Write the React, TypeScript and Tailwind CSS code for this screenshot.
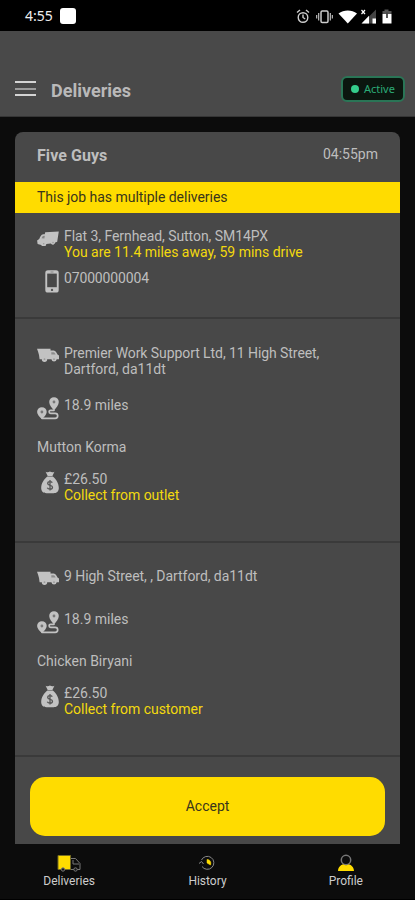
import React from "react";

const Truck = () => (
  <svg viewBox="0 0 22 14" className="h-[14px] w-[22px]" fill="currentColor">
    <path d="M0 0.8h13.5v1.6h3.2c2 0 3 2.3 3.8 4.2l1.5 1v3.6h-2.3a2.7 2.7 0 0 1-5.3 0h-4.2a2.7 2.7 0 0 1-5.4 0H2.6L2 7 1 3.4z" />
    <path d="M14.3 4.2h2.3c1 0 1.6 1.3 2 2.4h-4.3z" fill="#8c8c8c" />
    <circle cx="7.5" cy="11.2" r="0.9" fill="#999" />
    <circle cx="17" cy="11.2" r="0.9" fill="#999" />
  </svg>
);

const TruckLeft = () => (
  <svg viewBox="0 0 22 15" className="h-[15px] w-[22px]" fill="currentColor">
    <path d="M8.2 1.2 21.8.6l-1.6 10.2-2 .8a2.4 2.4 0 0 1-4.4 1l-4.5.4a2.6 2.6 0 0 1-5 .9L.6 13 .1 9.6l2.1-1.5C3.1 6 4 3.6 6.2 3.3l1.5-.1z" />
    <path d="m4.5 7.2 1.3-2.3 2-.2-.4 2.7z" fill="#858585" />
    <circle cx="6.7" cy="12.7" r="0.8" fill="#999" />
    <circle cx="16" cy="11.6" r="0.8" fill="#999" />
  </svg>
);

const Phone = () => (
  <svg viewBox="0 0 14 23" className="h-[23px] w-[14px]">
    <rect x="0.3" y="0.3" width="13.4" height="22.2" rx="2.6" fill="currentColor" />
    <rect x="2.2" y="3.6" width="9.6" height="13.6" fill="#484848" />
    <circle cx="7" cy="19.9" r="1.2" fill="#555" />
    <path d="M5.5 2h3" stroke="#777" strokeWidth="0.8" />
  </svg>
);

const Route = () => (
  <svg viewBox="0 0 22 23" className="h-[23px] w-[22px]">
    <path d="M5 21.3h13.2a2.5 2.5 0 0 0 0-5h-4.6a1.5 1.5 0 0 1 0-3H17" fill="none" stroke="currentColor" strokeWidth="1.7" strokeLinecap="round" />
    <path d="M17 0.2a4.8 4.8 0 0 1 4.8 4.8c0 3-2.7 6-4.8 8.4-2.1-2.4-4.8-5.4-4.8-8.4A4.8 4.8 0 0 1 17 .2zM4.9 10.2A4.8 4.8 0 0 1 9.7 15c0 2.4-2.5 5-4.8 7C2.6 20 .1 17.4.1 15a4.8 4.8 0 0 1 4.8-4.8z" fill="currentColor" />
    <circle cx="17" cy="5" r="1.4" fill="#777" />
    <circle cx="4.9" cy="15" r="1.4" fill="#777" />
  </svg>
);

const Money = () => (
  <svg viewBox="0 0 18 23" className="h-[23px] w-[18px]">
    <path d="M4.6 0.7c1.5 1 2.8.8 4.3-.1 1.6.9 3 1.1 4.5.1l-2 4.200H6.700zM6.400 5.500h5.400c3.300 2.400 6 6.800 6 11.500 0 3.500-2.300 5.200-5.200 5.200H5.400C2.500 22.200.2 20.500.2 17c0-4.700 2.900-9.100 6.200-11.500z" fill="currentColor" />
    <path d="M11.300 11.700c-.5-.8-1.300-1.100-2.300-1.100-1.300 0-2.300.6-2.300 1.800 0 2.700 4.800 1.200 4.800 3.800 0 1.200-1.100 1.900-2.500 1.900-1.200 0-2.200-.4-2.700-1.400M9 9v10.500" fill="none" stroke="#555" strokeWidth="1.300" />
  </svg>
);

function Row({ icon, children, className = "" }: { icon: React.ReactNode; children: React.ReactNode; className?: string }) {
  return (
    <div className={`flex text-[14px] leading-4 ${className}`}>
      <div className="flex h-4 w-[27px] shrink-0 justify-end pr-[5px] text-[#c2c2c2]">{icon}</div>
      <div className="whitespace-nowrap">{children}</div>
    </div>
  );
}

const Yellow = ({ children }: { children: React.ReactNode }) => <div className="tracking-[-0.02px] text-[#f3d90e]">{children}</div>;

function Drop({ address, item, collect, className, addressClass }: { address: React.ReactNode; item: string; collect: string; className: string; addressClass: string }) {
  return (
    <section className={`flex flex-col border-b-2 border-[#3a3a3a] pl-[22px] ${className}`}>
      <Row icon={<div className="mt-[3px]"><Truck /></div>} className={addressClass}>{address}</Row>
      <Row icon={<div><Route /></div>} className="mt-[26px] h-4">18.9 miles</Row>
      <div className="mt-[26px] text-[14px] leading-4">{item}</div>
      <Row icon={<div><Money /></div>} className="mt-4">
        <div>£26.50</div>
        <Yellow>{collect}</Yellow>
      </Row>
    </section>
  );
}

export default function App() {
  return (
    <div className="flex h-[900px] w-[415px] flex-col overflow-hidden bg-[#0c0c0c] font-['Roboto',sans-serif] text-[#bebebe]">
      <div className="flex h-[31px] shrink-0 items-center bg-black pl-[25px] pr-[22px] text-white">
        <span className="font-['Noto_Sans',sans-serif] text-[14px] text-[#eee]">4:55</span>
        <span className="ml-[7px] h-4 w-4 rounded-[3px] bg-white" />
        <svg viewBox="0 0 98 18" className="ml-auto h-[18px] w-[98px]" fill="none" stroke="#ccc">
          <circle cx="8" cy="10.500" r="4.800" strokeWidth="1.400" />
          <path d="M8 7.500v3l2.200 1.500M2 5.500l3-2.500M14 5.500l-3-2.500" strokeWidth="1.400" />
          <rect x="26" y="4" width="7" height="11.500" rx="1.200" strokeWidth="1.500" />
          <path d="M23.700 6v7.500M35.300 6v7.500M21.700 8v3.500M37.300 8v3.500" strokeWidth="1.100" />
          <path d="M43.500 6.500c5.200-4 13.300-4 18.500 0L52.800 16.500z" fill="#fff" stroke="none" />
          <path d="M81 2.500v14H67z" fill="#444" stroke="none" />
          <path d="M74 8.700v7.800h-7.500zM77.500 11.500h3.500v5h-3.500z" fill="#fff" stroke="none" />
          <path d="m66.500 3 3.500 4m0-4-3.500 4" stroke="#fff" strokeWidth="1.200" />
          <path d="M89.500 2.500h4V4h3v3h-9V4h2z" fill="#555" stroke="none" />
          <path d="M87.500 7h9v9.500h-9z" fill="#fff" stroke="none" />
          <path d="M92 5.500V11" stroke="#444" strokeWidth="1.800" />
        </svg>
      </div>
      <header className="flex h-[86px] shrink-0 items-center border-b border-[#353535] bg-[#494949] pl-[15px] pr-[10px] pt-[30px]">
        <div className="flex h-[15px] w-[21px] flex-col justify-between">
          <i className="h-[2px] bg-[#d4d4d4]" />
          <i className="h-[2px] bg-[#9c9c9c]" />
          <i className="h-[2px] bg-[#d4d4d4]" />
        </div>
        <h1 className="ml-[15px] mt-[4px] text-[18px] font-bold leading-6 text-[#b9b9b9]">Deliveries</h1>
        <div className="ml-auto flex h-[26px] w-[64px] items-center rounded-[6px] border-2 border-[#2a7556] bg-[#0b160f] pl-[8px] text-[#2bab77]">
          <i className="h-2 w-2 rounded-full bg-[#35cd8c]" />
          <span className="ml-[5px] font-['Noto_Sans',sans-serif] text-[11px] leading-4">Active</span>
        </div>
      </header>
      <main className="mx-[15px] mt-[15px] flex h-[712px] shrink-0 flex-col overflow-hidden rounded-t-[8px] bg-[#484848]">
        <div className="flex h-[50px] shrink-0 justify-between px-[22px] pt-[14px]">
          <h2 className="text-[16px] font-bold leading-5 tracking-[0.06px]">Five Guys</h2>
          <span className="mt-[-1px] text-[14px] leading-[18px]">04:55pm</span>
        </div>
        <div className="flex h-[31px] shrink-0 items-center bg-[#ffdc00] pl-[22px] text-[14px] tracking-[-0.03px] text-[#39351c]">This job has multiple deliveries</div>
        <section className="h-[106px] shrink-0 border-b-2 border-[#3a3a3a] pl-[22px] pt-[15px]">
          <Row icon={<div className="mt-[3px]"><TruckLeft /></div>}>
            <div className="tracking-[-0.06px]">Flat 3, Fernhead, Sutton, SM14PX</div>
            <Yellow>You are 11.4 miles away, 59 mins drive</Yellow>
          </Row>
          <Row icon={<Phone />} className="mt-[10px] tracking-[-0.15px]">07000000004</Row>
        </section>
        <Drop className="h-[224px] shrink-0 pt-[26px]" addressClass="h-[26px] tracking-[-0.07px]" address={<><div>Premier Work Support Ltd, 11 High Street,</div><div className="tracking-normal">Dartford, da11dt</div></>} item="Mutton Korma" collect="Collect from outlet" />
        <Drop className="h-[214px] shrink-0 pt-[25px]" addressClass="h-[17px] tracking-[-0.05px]" address="9 High Street, , Dartford, da11dt" item="Chicken Biryani" collect="Collect from customer" />
        <div className="px-[15px] pt-[20px]">
          <button className="h-[59px] w-full rounded-[15px] bg-[#ffdc00] text-[14px] text-[#39351c]">Accept</button>
        </div>
      </main>
      <nav className="grid h-14 shrink-0 grid-cols-3 border-b border-black text-center text-[12px] leading-4 text-[#ccc]">
        <div className="flex flex-col items-center pt-[10px]">
          <svg viewBox="0 0 24 18" className="h-[18px] w-6" fill="none" stroke="#777">
            <path d="M1 1.500h12.500v14H1z" fill="#ffdc00" stroke="#776d20" />
            <path d="M14 4.500h4.500l4.500 5v6h-9M16 6v4h6" />
            <circle cx="6" cy="15.500" r="1.700" fill="#171717" />
            <circle cx="18.500" cy="15.500" r="1.700" fill="#171717" />
          </svg>
          <span className="mt-[1px]">Deliveries</span>
        </div>
        <div className="flex flex-col items-center pt-[10px]">
          <svg viewBox="0 0 18 18" className="h-[18px] w-[18px]" fill="none" stroke="#888">
            <path d="M3.500 6A6.500 6.500 0 1 1 4 12.500M1 9.500l2.500-2 2 2.500" />
            <path d="M9 5.500c3 0 4.500 2.500 3.500 5.500L9 9z" fill="#ffdc00" stroke="#ffdc00" strokeWidth="0.500" />
          </svg>
          <span className="mt-[1px]">History</span>
        </div>
        <div className="flex flex-col items-center pt-[10px]">
          <svg viewBox="0 0 18 18" className="h-[18px] w-[18px]" fill="none">
            <circle cx="9" cy="6" r="4.700" stroke="#777" strokeWidth="1.500" />
            <path d="M1 17c.3-4 2.700-5.800 5-6.700 2 1.300 4 1.300 6 0 2.300.9 4.700 2.700 5 6.700z" fill="#ffdc00" />
          </svg>
          <span className="mt-[1px]">Profile</span>
        </div>
      </nav>
    </div>
  );
}
